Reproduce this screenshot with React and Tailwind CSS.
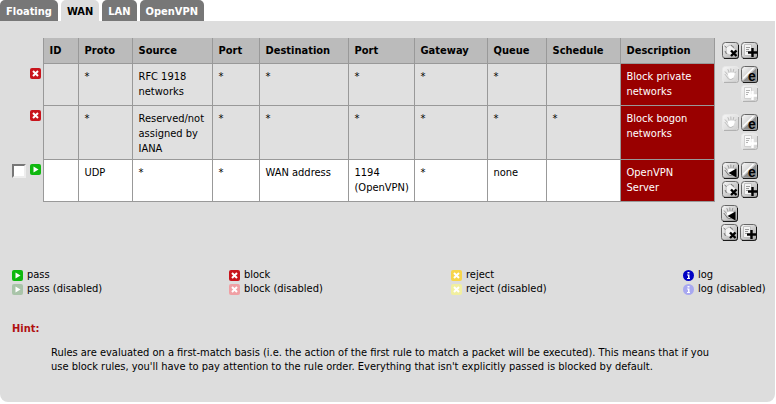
import React, { useState } from 'react';

const tabs = ['Floating', 'WAN', 'LAN', 'OpenVPN'];

const columns = ['ID', 'Proto', 'Source', 'Port', 'Destination', 'Port', 'Gateway', 'Queue', 'Schedule'];

const rules = [
    {
        action: 'block',
        cells: ['', '*', 'RFC 1918 networks', '*', '*', '*', '*', '*', ''],
        description: 'Block private networks',
        locked: true,
    },
    {
        action: 'block',
        cells: ['', '*', 'Reserved/not assigned by IANA', '*', '*', '*', '*', '*', '*'],
        description: 'Block bogon networks',
        locked: true,
    },
    {
        action: 'pass',
        cells: ['', 'UDP', '*', '*', 'WAN address', '1194 (OpenVPN)', '*', 'none', ''],
        description: 'OpenVPN Server',
        locked: false,
    },
];

const legend = ['pass', 'block', 'reject', 'log'];

const statusColors = {
    pass: ['#0fb80f', '#a9c4a9'],
    block: ['#c8141c', '#f0a0a4'],
    reject: ['#f7d54a', '#f1efa0'],
    log: ['#0000c4', '#a8a8f0'],
};

function StatusIcon({ type, disabled }) {
    const fill = statusColors[type][disabled ? 1 : 0];
    return (
        <svg className="block h-[11px] w-[11px] shrink-0" viewBox="0 0 11 11" aria-hidden="true">
            {type === 'log' ? (
                <circle cx="5.5" cy="5.5" r="5.5" fill={fill} />
            ) : (
                <rect width="11" height="11" rx="2" fill={fill} />
            )}
            {type === 'pass' && <path d="M3.5 2.5v6l5-3z" fill="#fff" />}
            {(type === 'block' || type === 'reject') && (
                <path d="M3 3l5 5M8 3l-5 5" stroke="#fff" strokeWidth="2" />
            )}
            {type === 'log' && <path d="M4.5 2h2v1.5h-2zM4 4.5h2.5V8H7v1H4V8h1V5.5H4z" fill="#fff" />}
        </svg>
    );
}

function ToolGlyph({ type, faded }) {
    if (type === 'move') {
        return (
            <>
                <path
                    d="M3 5.5l3 3.5M5.8 3.2l1.8 4.3M8.8 2.5l.2 4.5M11.8 3l-1 4M14 5.5l-2 2.5"
                    stroke={faded ? '#bbb' : '#999'}
                    strokeWidth="1"
                    fill="none"
                />
                <path d="M5.5 8l2-1.500h4l1.500 1-1.500 4-2 1.500h-2z" fill="#fff" />
                <path
                    d="M2.8 8l3.7 5q2.5 1.5 5-.8"
                    stroke={faded ? '#c0c0c0' : '#777'}
                    strokeWidth="1"
                    fill="none"
                />
                {!faded && <path d="M6.5 11l8-4.5v9z" fill="#000" />}
            </>
        );
    }
    if (type === 'edit') {
        return (
            <>
                <path d="M1.5 15.5L15.5 2v13.5z" fill="#8e8e8e" />
                <path d="M2 12.5L12.5 2" stroke="#fff" strokeWidth="1.5" />
                <text x="7" y="15" fontSize="14" fontWeight="bold" fontFamily="Liberation Sans, sans-serif" fill="#000">
                    e
                </text>
            </>
        );
    }
    if (type === 'delete') {
        return (
            <>
                <path d="M4 5.5l4-2.5 5.5 4.5-4.5 6-4.5-2z" fill="#f4f4f4" stroke="#c4c4c4" />
                <path d="M2.5 4l2 1.5M3 9l1.5 3M9 3l3 2.5" stroke="#777" />
                <path d="M9 8.5l5.5 5.5M14.5 8.5l-5.5 5.5" stroke="#000" strokeWidth="2.4" />
            </>
        );
    }
    return (
        <>
            <path d="M3.5 2.5h7v11h-7z" fill={faded ? '#fafafa' : '#f4f4f4'} stroke={faded ? '#d0d0d0' : '#c0c0c0'} />
            <path d="M5 5.5h4M5 7.5h3M5 9.5h2" stroke={faded ? '#b4b4b4' : '#999'} />
            <path d="M11.5 6v9M7 10.5h9" stroke={faded ? '#fff' : '#000'} strokeWidth="2.4" />
        </>
    );
}

function ToolButton({ type, label, faded }) {
    return (
        <button type="button" aria-label={label} disabled={faded} className="block h-[17px] w-[17px]">
            <svg className="block h-[17px] w-[17px]" viewBox="0 0 17 17" aria-hidden="true">
                <defs>
                    <linearGradient id={faded ? 'metalFaded' : 'metal'} x1="0" y1="0" x2="1" y2="1">
                        <stop offset="0" stopColor={faded ? '#f6f6f6' : '#fafafa'} />
                        <stop offset="1" stopColor={faded ? '#cfcfcf' : '#a4a4a4'} />
                    </linearGradient>
                </defs>
                <rect
                    x="0.5"
                    y="0.5"
                    width="16"
                    height="16"
                    rx="3"
                    fill={faded ? 'url(#metalFaded)' : 'url(#metal)'}
                    stroke={faded ? '#e9e9e9' : '#666'}
                />
                <path
                    d="M2 16.4h12.5q2 0 2-2V3"
                    fill="none"
                    stroke={faded ? '#aaa' : '#111'}
                    strokeWidth="1"
                />
                <ToolGlyph type={type} faded={faded} />
            </svg>
        </button>
    );
}

function Tools({ children }) {
    return <div className="grid grid-cols-[17px_17px] gap-[2px] pl-[7px]">{children}</div>;
}

function RuleRow({ rule }) {
    const [checked, setChecked] = useState(false);
    const cellColor = rule.locked ? 'bg-[#e0e0e0]' : 'bg-white';

    return (
        <tr className="h-[42px] align-top">
            <td className="pt-[5px]">
                <div className="flex justify-end gap-1 pr-[2px]">
                    {!rule.locked && (
                        <input
                            type="checkbox"
                            aria-label={`Select ${rule.description}`}
                            checked={checked}
                            onChange={(e) => setChecked(e.target.checked)}
                            className="h-[14px] w-[14px] appearance-none border-2 border-t-[#777] border-r-[#eee] border-b-[#eee] border-l-[#777] bg-white checked:bg-gray-600"
                        />
                    )}
                    <StatusIcon type={rule.action} />
                </div>
            </td>
            {rule.cells.map((cell, index) => (
                <td key={index} className={`border border-[#999] pt-[5px] pr-1 pb-[3px] pl-[6px] ${cellColor}`}>
                    {cell}
                </td>
            ))}
            <td className="border border-[#999] bg-[#900] pt-[5px] pr-5 pb-[3px] pl-[6px] text-white">
                {rule.description}
            </td>
            <td className="align-middle">
                <Tools>
                    <ToolButton type="move" label="Move rules before this one" faded={rule.locked} />
                    <ToolButton type="edit" label="Edit rule" />
                    {rule.locked ? <span /> : <ToolButton type="delete" label="Delete rule" />}
                    <ToolButton type="add" label="Add rule based on this one" faded={rule.locked} />
                </Tools>
            </td>
        </tr>
    );
}

function App() {
    const [active, setActive] = useState('WAN');

    return (
        <div className="min-h-screen bg-white pr-px font-['DejaVu_Sans_Condensed','DejaVu_Sans',sans-serif] text-[11px] leading-[15px] text-black">
            <nav className="flex gap-[3px]">
                {tabs.map((tab) => (
                    <button
                        key={tab}
                        type="button"
                        onClick={() => setActive(tab)}
                        className={`h-[21px] rounded-t-[5px] px-[6px] pt-px font-bold ${active === tab ? 'bg-[#ddd] text-black' : 'bg-[#777] text-white'}`}
                    >
                        {tab}
                    </button>
                ))}
            </nav>

            <main className="rounded-b-lg bg-[#ddd] pt-[17px] pb-7">
                <table className="w-full table-fixed border-collapse">
                    <colgroup>
                        <col className="w-[43px]" />
                        <col className="w-[35px]" />
                        <col className="w-[54px]" />
                        <col className="w-[80px]" />
                        <col className="w-[47px]" />
                        <col className="w-[89px]" />
                        <col className="w-[66px]" />
                        <col className="w-[73px]" />
                        <col className="w-[59px]" />
                        <col className="w-[74px]" />
                        <col />
                        <col className="w-[61px]" />
                    </colgroup>
                    <thead>
                        <tr className="h-[25px] text-left">
                            <td />
                            {columns.map((name, index) => (
                                <th key={index} className="border border-t-0 border-[#999] bg-[#bbb] pt-px pl-[6px]">
                                    {name}
                                </th>
                            ))}
                            <th className="border border-t-0 border-[#999] bg-[#bbb] pt-px pl-[6px]">Description</th>
                            <td>
                                <Tools>
                                    <ToolButton type="delete" label="Delete selected rules" />
                                    <ToolButton type="add" label="Add new rule" />
                                </Tools>
                            </td>
                        </tr>
                    </thead>
                    <tbody>
                        {rules.map((rule) => (
                            <RuleRow key={rule.description} rule={rule} />
                        ))}
                        <tr>
                            <td colSpan={11} />
                            <td className="pt-1">
                                <Tools>
                                    <ToolButton type="move" label="Move selected rules to end" />
                                    <span />
                                    <ToolButton type="delete" label="Delete selected rules" />
                                    <ToolButton type="add" label="Add new rule" />
                                </Tools>
                            </td>
                        </tr>
                    </tbody>
                </table>

                <ul className="mt-[27px] grid grid-cols-[217fr_222fr_232fr_92fr] pl-3 leading-[14px]">
                    {legend.map((name) => (
                        <li key={name} className="whitespace-nowrap">
                            <div className="flex items-center gap-1">
                                <StatusIcon type={name} />
                                {name}
                            </div>
                            <div className="flex items-center gap-1">
                                <StatusIcon type={name} disabled />
                                {name} (disabled)
                            </div>
                        </li>
                    ))}
                </ul>

                <section className="mt-[26px] pl-3 leading-[14px]">
                    <h2 className="font-bold text-[#b01010]">Hint:</h2>
                    <p className="mt-[10px] pr-[56px] pl-[39px]">
                        Rules are evaluated on a first-match basis (i.e. the action of the first rule to match a packet will be
                        executed). This means that if you use block rules, you'll have to pay attention to the rule order.
                        Everything that isn't explicitly passed is blocked by default.
                    </p>
                </section>
            </main>
        </div>
    );
}

export default App;
